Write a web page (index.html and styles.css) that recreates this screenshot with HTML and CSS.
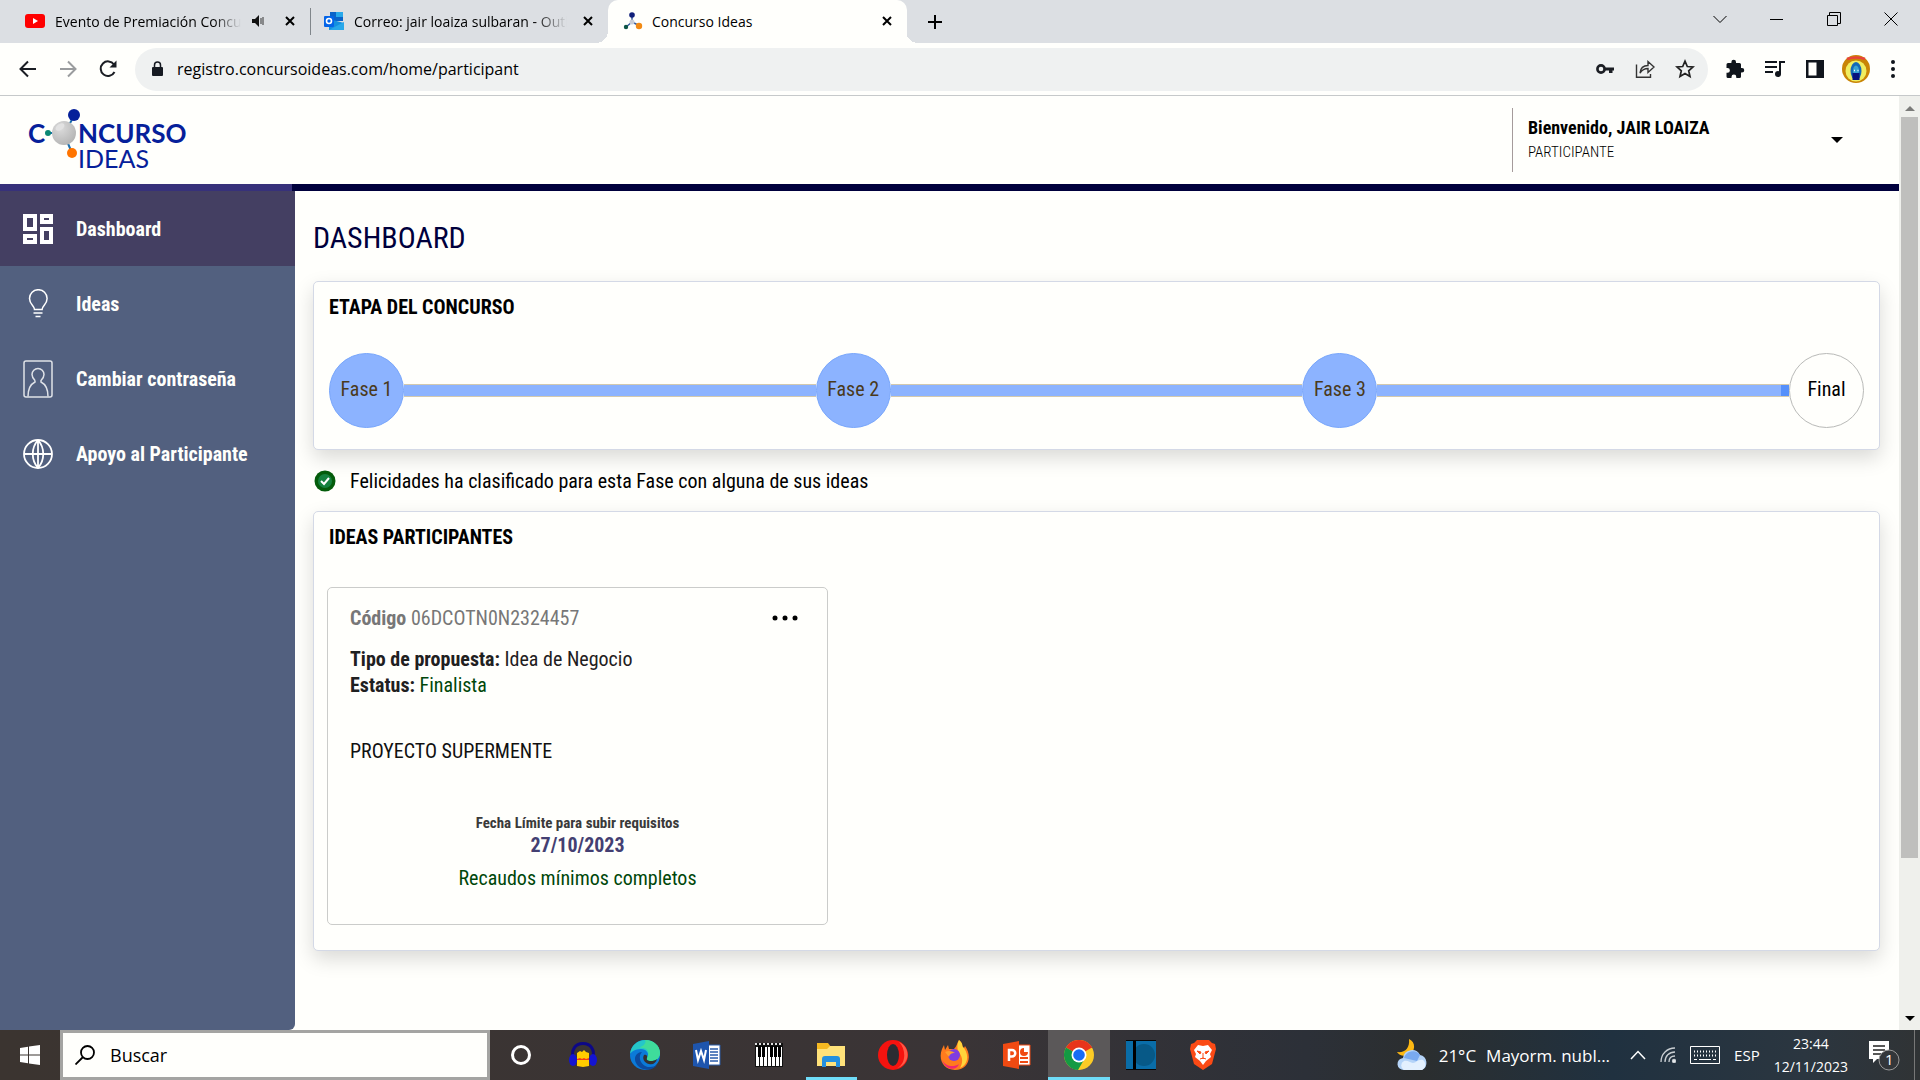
FILE: index.html
```html
<!DOCTYPE html>
<html lang="es">
<head>
    <meta charset="UTF-8">
    <meta name="viewport" content="width=device-width, initial-scale=1.0">
    <title>Concurso Ideas</title>
    <link rel="stylesheet" href="styles.css">
</head>
<body>
    <!-- Tabs -->
    <div class="tab-strip">
        <div class="tab">
            <svg class="favicon" width="20" height="20" viewBox="0 0 20 20"><rect y="3" width="20" height="14" rx="3" fill="#f00"/><path d="M8 7l5 3-5 3z" fill="#fff"/></svg>
            <span class="tab-title fade">Evento de Premiación Concurso</span>
            <svg width="14" height="14" viewBox="0 0 14 14"><path d="M1 5h3l4-4v12L4 9H1z" fill="#111"/><path d="M10 4v6M12 3v8" stroke="#333" fill="none"/></svg>
            <button class="tab-close" aria-label="Cerrar"><svg width="10" height="10" viewBox="0 0 10 10"><path d="M1 1l8 8M9 1l-8 8"/></svg></button>
        </div>
        <div class="tab tab-second">
            <svg class="favicon" width="20" height="20" viewBox="0 0 20 20"><path d="M6 1h13v9H6z" fill="#0a63c9"/><path d="M12 1h7v5h-7z" fill="#28a8ea"/><path d="M5 8l15 4v7H5z" fill="#1490df"/><path d="M5 19l15-8v8z" fill="#28a8ea"/><rect y="5" width="10" height="11" rx="1" fill="#0364e8"/><circle cx="5" cy="10" r="2.5" fill="none" stroke="#fff" stroke-width="1.6"/></svg>
            <span class="tab-title fade">Correo: jair loaiza sulbaran - Outlook</span>
            <button class="tab-close" aria-label="Cerrar"><svg width="10" height="10" viewBox="0 0 10 10"><path d="M1 1l8 8M9 1l-8 8"/></svg></button>
        </div>
        <div class="tab tab-active">
            <svg class="favicon" width="20" height="20" viewBox="0 0 20 20"><path d="M9 4v7M9 11l-6 5M9 11l8 4" stroke="#345a9c" stroke-width="1.5"/><circle cx="9" cy="4" r="2.8" fill="#101f7a"/><circle cx="9" cy="11" r="2.5" fill="#c8ccd6"/><circle cx="3" cy="16" r="2.2" fill="#0d5547"/><circle cx="16" cy="15" r="3.2" fill="#f28a13"/></svg>
            <span class="tab-title">Concurso Ideas</span>
            <button class="tab-close" aria-label="Cerrar"><svg width="10" height="10" viewBox="0 0 10 10"><path d="M1 1l8 8M9 1l-8 8"/></svg></button>
        </div>
        <button class="new-tab" aria-label="Nueva pestaña"><svg width="16" height="16" viewBox="0 0 16 16"><path d="M8 1v14M1 8h14" stroke="#000" stroke-width="2"/></svg></button>
        <div class="window-controls">
            <button aria-label="Buscar pestañas"><svg width="14" height="14" viewBox="0 0 14 14"><path d="M.5 4L7 10.500 13.500 4"/></svg></button>
            <button aria-label="Minimizar"><svg width="14" height="14" viewBox="0 0 14 14"><path d="M0 7.500h13"/></svg></button>
            <button aria-label="Restaurar"><svg width="14" height="14" viewBox="0 0 14 14"><path d="M.5 3.500h10v10H.5zM2.500 3V.5h11v11H11"/></svg></button>
            <button aria-label="Cerrar ventana"><svg width="14" height="14" viewBox="0 0 14 14"><path d="M.5 .5l13 13M13.500 .5l-13 13"/></svg></button>
        </div>
    </div>

    <!-- Address bar -->
    <div class="toolbar">
        <button aria-label="Atrás"><svg width="20" height="20" viewBox="0 0 20 20"><path d="M18 10H3M10 2.500L2.500 10l7.500 7.500" stroke="#1b1e24" stroke-width="2" fill="none"/></svg></button>
        <button aria-label="Adelante"><svg width="20" height="20" viewBox="0 0 20 20"><path d="M2 10h15M10 2.500L17.500 10 10 17.500" stroke="#9a9c9e" stroke-width="2" fill="none"/></svg></button>
        <button aria-label="Recargar"><svg width="20" height="20" viewBox="0 0 20 20"><path d="M16.500 13A7.300 7.300 0 1 1 16 5.500" stroke="#1b1e24" stroke-width="2" fill="none"/><path d="M18.500 1.500v7h-7z" fill="#1b1e24"/></svg></button>
        <div class="omnibox">
            <svg width="12" height="16" viewBox="0 0 12 16"><rect x="1" y="6" width="11" height="9" rx="1" fill="#161a22"/><path d="M3.500 6V4a3 3 0 0 1 6 0v2" stroke="#161a22" stroke-width="1.500" fill="none"/></svg>
            <input type="text" class="url" aria-label="Dirección" value="registro.concursoideas.com/home/participant">
            <button aria-label="Contraseñas"><svg width="20" height="20" viewBox="0 0 20 20"><circle cx="6" cy="10" r="3.600" stroke="#1b1e24" stroke-width="2.600" fill="none"/><path d="M9 8.500h10v3h-1.500V14H14v-2.500H9z" fill="#1b1e24"/></svg></button>
            <button aria-label="Compartir"><svg width="20" height="20" viewBox="0 0 20 20" fill="none" stroke="#333" stroke-width="1.400"><path d="M1.500 5.500v12.800h14V15"/><path d="M5 14c.5-5 3-7.500 8-7.500V2.500l6 5.500-6 5.500v-4c-4 0-6 1.500-8 4.500z"/></svg></button>
            <button aria-label="Favoritos"><svg width="20" height="20" viewBox="0 0 20 20"><path d="M10 2.200l2.300 5.300 5.700.5-4.300 3.800 1.300 5.700-5-3-5 3 1.300-5.700L2 8l5.700-.5z" stroke="#222" stroke-width="1.700" fill="none"/></svg></button>
        </div>
        <div class="toolbar-actions">
            <button aria-label="Extensiones"><svg width="20" height="20" viewBox="0 0 20 20"><path d="M17 9h-1V5.500A1.500 1.500 0 0 0 14.500 4H11V3a2.300 2.300 0 0 0-4.600 0v1H3a1.500 1.500 0 0 0-1.500 1.500V9h1a2.400 2.400 0 0 1 0 4.800h-1v3.700A1.500 1.500 0 0 0 3 19h3.500v-1a2.400 2.400 0 0 1 4.800 0v1h3.200a1.500 1.500 0 0 0 1.500-1.500v-4h1a2.250 2.250 0 0 0 0-4.500z" fill="#10151c"/></svg></button>
            <button aria-label="Multimedia"><svg width="20" height="20" viewBox="0 0 20 20"><path d="M0 3h12M0 8h12M0 13h8" stroke="#10151c" stroke-width="2"/><path d="M15 15V3h5" stroke="#10151c" stroke-width="2" fill="none"/><circle cx="13" cy="15" r="3" fill="#10151c"/></svg></button>
            <button aria-label="Panel lateral"><svg width="20" height="20" viewBox="0 0 20 20"><path d="M1 1h18v18H1z" fill="#10151c"/><path d="M3.500 3.500h8v13h-8z" fill="#fffffc"/></svg></button>
            <button aria-label="Perfil"><svg width="28" height="28" viewBox="0 0 28 28"><circle cx="14" cy="14" r="14" fill="#c98505"/><circle cx="14" cy="16" r="10.500" fill="#f0ee60"/><path d="M5 4q9-3 18 0" stroke="#e8433a" stroke-width="2.500" fill="none"/><ellipse cx="14" cy="16" rx="5.500" ry="9" fill="#1268b8"/><ellipse cx="14" cy="16" rx="3" ry="5.500" fill="#38a3d2"/><path d="M10.500 18h7v7h-7z" fill="#07137d"/><path d="M12 15.500h1M15.500 15.500h1" stroke="#fff" stroke-width="1.500"/></svg></button>
            <button aria-label="Menú"><svg width="6" height="20" viewBox="0 0 6 20" fill="#10151c"><circle cx="3" cy="3" r="2"/><circle cx="3" cy="10" r="2"/><circle cx="3" cy="17" r="2"/></svg></button>
        </div>
    </div>

    <div class="viewport">
        <div class="site">
            <header class="site-header">
                <svg class="logo" width="168" height="64" viewBox="0 0 168 64" role="img" aria-label="Concurso Ideas">
                    <defs>
                        <radialGradient id="ball" cx="35%" cy="30%" r="75%"><stop offset="0" stop-color="#dcdcdc"/><stop offset="1" stop-color="#b4b4b4"/></radialGradient>
                    </defs>
                    <path d="M46 8L36 26M20 25h10M36 26l8 19" stroke="#1c6fae" stroke-width="2"/>
                    <circle cx="46" cy="7" r="6" fill="#06209a"/>
                    <circle cx="20" cy="25" r="3" fill="#0b8874"/>
                    <circle cx="36" cy="25" r="12" fill="url(#ball)"/>
                    <ellipse cx="32" cy="19" rx="5" ry="3" fill="#e2e2e2" transform="rotate(-35 32 19)"/>
                    <circle cx="44" cy="45" r="5" fill="#ff7400"/>
                    <text class="logo-bold" x="0" y="35">C</text>
                    <text class="logo-bold" x="50" y="35">NCURSO</text>
                    <text class="logo-thin" x="50" y="60">IDEAS</text>
                </svg>
                <button class="user-menu">
                    <span class="user-text">
                        <strong>Bienvenido, JAIR LOAIZA</strong>
                        <span class="role">PARTICIPANTE</span>
                    </span>
                    <svg width="12" height="6" viewBox="0 0 12 6"><path d="M0 0h12L6 6z" fill="#000"/></svg>
                </button>
            </header>

            <div class="site-body">
                <nav class="sidebar">
                    <a href="#" class="active">
                        <svg width="30" height="30" viewBox="0 0 30 30" fill="none" stroke="#fff" stroke-width="4"><path d="M2 2h10v13H2zM19 2h9v6h-9zM2 22h10v6H2zM19 15h9v13h-9z"/></svg>
                        Dashboard
                    </a>
                    <a href="#">
                        <svg width="30" height="30" viewBox="0 0 30 30" fill="none" stroke="#fff" stroke-width="1.500"><path d="M11.500 20.500c0-4-5-5-5-11a8.800 8.800 0 0 1 17.600 0c0 6-5 7-5 11zM10.500 24h9M12.500 27.500h5"/></svg>
                        Ideas
                    </a>
                    <a href="#">
                        <svg width="30" height="38" viewBox="0 0 30 38" fill="none" stroke="#dfe2e8" stroke-width="1.500"><rect x="1" y="1" width="28" height="36" rx="2"/><path d="M12 20.500c-2-2-3-4-3-6a6 6 0 0 1 12 0c0 2-1 4-3 6v1.500c4 2 7 6 7 14.500M12 20.500V22c-4 2-7 6-7 14.500"/></svg>
                        Cambiar contraseña
                    </a>
                    <a href="#">
                        <svg width="30" height="30" viewBox="0 0 30 30" fill="none" stroke="#fff" stroke-width="1.800"><circle cx="15" cy="15" r="14"/><path d="M1 15h28M15 1c-7 8-7 20 0 28M15 1c7 8 7 20 0 28M15 1v28"/></svg>
                        Apoyo al Participante
                    </a>
                </nav>

                <main class="content">
                    <h1>DASHBOARD</h1>

                    <section class="card stage-card">
                        <h2>ETAPA DEL CONCURSO</h2>
                        <ol class="stages">
                            <li class="stage done">Fase 1</li>
                            <li class="line"></li>
                            <li class="stage done">Fase 2</li>
                            <li class="line"></li>
                            <li class="stage done">Fase 3</li>
                            <li class="line last"></li>
                            <li class="stage">Final</li>
                        </ol>
                    </section>

                    <p class="notice">
                        <svg width="22" height="22" viewBox="0 0 22 22"><circle cx="11" cy="11" r="10.500" fill="#045c0b"/><circle cx="11" cy="11" r="7" fill="#15813e"/><path d="M7 11l3 3 5-6" stroke="#fff" stroke-width="2" fill="none"/></svg>
                        Felicidades ha clasificado para esta Fase con alguna de sus ideas
                    </p>

                    <section class="card ideas-card">
                        <h2>IDEAS PARTICIPANTES</h2>
                        <article class="idea">
                            <div class="idea-top">
                                <span class="code"><b>Código</b> 06DCOTN0N2324457</span>
                                <button aria-label="Opciones"><svg width="26" height="6" viewBox="0 0 26 6"><circle cx="3" cy="3" r="2.500"/><circle cx="13" cy="3" r="2.500"/><circle cx="23" cy="3" r="2.500"/></svg></button>
                            </div>
                            <p><b>Tipo de propuesta:</b> Idea de Negocio</p>
                            <p><b>Estatus:</b> <span class="green">Finalista</span></p>
                            <p class="idea-name">PROYECTO SUPERMENTE</p>
                            <div class="deadline">
                                <span class="deadline-label">Fecha Límite para subir requisitos</span>
                                <strong>27/10/2023</strong>
                                <span class="green requirements">Recaudos mínimos completos</span>
                            </div>
                        </article>
                    </section>
                </main>
            </div>
        </div>

        <div class="scrollbar">
            <svg width="10" height="5" viewBox="0 0 10 5"><path d="M0 5h10L5 0z" fill="#7b7b79"/></svg>
            <div class="track"><div class="thumb"></div></div>
            <svg width="10" height="5" viewBox="0 0 10 5"><path d="M0 0h10L5 5z" fill="#000"/></svg>
        </div>
    </div>

    <!-- Taskbar -->
    <footer class="taskbar">
        <button class="start" aria-label="Inicio"><svg width="20" height="20" viewBox="0 0 20 20" fill="#fff"><path d="M0 3l8-1.200v7.700H0zM9 1.600L20 0v9.500H9zM0 10.500h8v7.700L0 17zM9 10.500h11V20L9 18.400z"/></svg></button>
        <label class="search">
            <svg width="20" height="20" viewBox="0 0 20 20"><circle cx="12.500" cy="7.500" r="6.500" stroke="#000" stroke-width="1.800" fill="none"/><path d="M8 12l-7.500 7.500" stroke="#000" stroke-width="1.800"/></svg>
            <input type="text" placeholder="Buscar" aria-label="Buscar">
        </label>
        <div class="apps">
            <button aria-label="Cortana"><svg width="22" height="22" viewBox="0 0 22 22"><circle cx="11" cy="11" r="8.500" stroke="#fff" stroke-width="3" fill="none"/></svg></button>
            <button aria-label="Audacity"><svg width="28" height="28" viewBox="0 0 28 28"><path d="M4 18C2 9 6 2.500 14 2.500S26 9 24 18" stroke="#0d0887" stroke-width="3" fill="none"/><path d="M8 25V12l3-2 2 1 2-2 2 2 3 1v13l-6 1z" fill="#fc0"/><path d="M8 18l3-1 2 1 2-1 2 1 3-1v2H8z" fill="#f33a12"/><ellipse cx="4" cy="19" rx="4" ry="6" fill="#1414d2"/><ellipse cx="24" cy="19" rx="4" ry="6" fill="#1414d2"/></svg></button>
            <button aria-label="Edge"><svg width="30" height="30" viewBox="0 0 30 30"><circle cx="15" cy="15" r="15" fill="#0b7ad8"/><path d="M0 14C1 5 8 0 15 0c9 0 15 6 15 13 0 5-4 8-9 8-3 0-5-1-4-3 3-5-1-9-6-9-6 0-10 3-11 5z" fill="#25c7c9"/><path d="M15 0c9 0 15 6 15 13 0 5-4 8-9 8-3 0-5-1-4-3 4-7-1-11-8-10C13 6 17 3 15 0z" fill="#3fdc9b"/><path d="M12 12c-5 5-1 15 8 15 3 0 5-1 7-2-5 7-17 6-21-2-3-6 1-11 6-11z" fill="#0c4a9e"/><path d="M17 18c-1 2 1 3 4 3 2 0 4-.5 6-2-1 4-4 6-8 5-5-1-7-6-5-9 2-1 4 1 3 3z" fill="#35302f"/></svg></button>
            <button aria-label="Word"><svg width="28" height="28" viewBox="0 0 28 28"><path d="M15 4h12v20H15z" fill="#fff" stroke="#2a5caa"/><path d="M17 8h8M17 11h8M17 14h8M17 17h8M17 20h8" stroke="#2a5caa" stroke-width="1.500"/><path d="M0 3l16-3v28L0 25z" fill="#1e55ad"/><path d="M3 9l2 10 3-9 3 9 2-10" stroke="#fff" stroke-width="2" fill="none"/></svg></button>
            <button aria-label="Piano"><svg width="28" height="24" viewBox="0 0 28 24"><path d="M0 0h28v24H0z" fill="#111"/><path d="M1 4h3v19H1zM5 4h3v19H5zM9 4h3v19H9zM13 4h3v19h-3zM17 4h3v19h-3zM21 4h3v19h-3zM25 4h2v19h-2z" fill="#fff"/><path d="M3 3h3v11H3zM7 3h3v11H7zM15 3h3v11h-3zM19 3h3v11h-3zM23 3h3v11h-3z" fill="#000"/><path d="M0 1h28" stroke="#ddd" stroke-dasharray="2 2" stroke-width="2"/></svg></button>
            <button aria-label="Explorador" class="open"><svg width="28" height="24" viewBox="0 0 28 24"><path d="M0 0h11l3 4h14v19H0z" fill="#f5b921"/><path d="M0 6h10l3-3h15v20H0z" fill="#ffe27a"/><path d="M5 24v-8a3 3 0 0 1 3-3h12a3 3 0 0 1 3 3v8h-4v-5H9v5z" fill="#2490df"/></svg></button>
            <button aria-label="Opera"><svg width="30" height="30" viewBox="0 0 30 30"><circle cx="15" cy="15" r="15" fill="#f5130f"/><path d="M17 29C28 26 29 10 21 2c12 5 12 23-4 27z" fill="#ff5a47"/><ellipse cx="15" cy="15" rx="6" ry="11" fill="#2b2c32"/></svg></button>
            <button aria-label="Firefox"><svg width="30" height="30" viewBox="0 0 30 30"><path d="M19 0c5 4 2 6 5 8l1-2c8 11 3 24-10 24C3 30-2 19 2 9l2-4 1 5 3-5 1 4h5c3-3 3-6 5-9z" fill="#ff7b1d"/><path d="M19 0c5 4 2 6 5 8 6 9 3 17-4 20 4-7 2-12-2-17-1-4-1-7 1-11z" fill="#ffd43b"/><path d="M2 20c3 6 11 8 17 4-2 7-13 7-17-4z" fill="#f02770"/><circle cx="14" cy="15" r="6" fill="#7f3ce0"/><path d="M5 12c4-2 7-1 10 1-4 0-5 1-6 4z" fill="#ff9d2d"/></svg></button>
            <button aria-label="PowerPoint"><svg width="28" height="28" viewBox="0 0 28 28"><path d="M15 4h12v20H15z" fill="#fff" stroke="#f04a12"/><path d="M17 17h8M17 21h8" stroke="#f04a12" stroke-width="2"/><path d="M21 7a4 4 0 1 0 4 4h-4z" fill="#f04a12"/><path d="M0 3l16-3v28L0 25z" fill="#f04a12"/><path d="M6 20V9h3a3 3 0 0 1 0 6.500H6" stroke="#fff" stroke-width="2.500" fill="none"/></svg></button>
            <button aria-label="Chrome" class="open current"><svg width="30" height="30" viewBox="0 0 30 30"><circle cx="15" cy="15" r="15" fill="#fccb26"/><path d="M15 15L2 7.500A15 15 0 0 1 28 7.500z" fill="#e8341c"/><path d="M2 7.500A15 15 0 0 0 14 30l7-12-6-3z" fill="#149a43"/><path d="M15 8h13.300L26 5H12z" fill="#e8341c"/><circle cx="15" cy="15" r="7.500" fill="#fff"/><circle cx="15" cy="15" r="5.800" fill="#176cf5"/></svg></button>
            <button aria-label="Libro"><svg width="30" height="30" viewBox="0 0 30 30"><path d="M0 0h30v30H0z" fill="#0a6da8"/><circle cx="18" cy="15" r="11" fill="#075987"/><path d="M8.500 0v30" stroke="#000" stroke-width="3"/><path d="M0 .5h30M0 29.500h30" stroke="#050505"/></svg></button>
            <button aria-label="Brave"><svg width="26" height="30" viewBox="0 0 26 30"><path d="M7 0h12l3 3 3 1 1 5-4 15-9 6-9-6L0 9l1-5 3-1z" fill="#fb4a15"/><path d="M8 5l5 1 5-1 4 5-2 4 1 3-5 4-3 4-3-4-5-4 1-3-2-4z" fill="#fff"/><path d="M7 11l4 1-1 2zM19 11l-4 1 1 2zM13 13v5M10 19l3-1 3 1" stroke="#fb4a15" fill="#fb4a15"/></svg></button>
        </div>
        <div class="tray">
            <button class="weather">
                <svg width="32" height="32" viewBox="0 0 32 32"><path d="M12 0c7 3 7 13-1 16-5 2-9 0-11-3 8 1 13-4 12-13z" fill="#fdb813"/><path d="M7 31a6 6 0 0 1-1-12 9 9 0 0 1 17-3 8 8 0 0 1 2 15z" fill="#b5d4f8"/><path d="M7 19a9 9 0 0 1 16-3l-3 6z" fill="#79aaf0"/><path d="M7 31a5 5 0 0 1 0-9c4-1 6 2 9 2s5-4 10-3a6 6 0 0 1-1 10z" fill="#e3f0fe"/></svg>
                <span>21°C</span><span>Mayorm. nubl...</span>
            </button>
            <button aria-label="Iconos ocultos"><svg width="16" height="10" viewBox="0 0 16 10"><path d="M1 9l7-7.500L15 9" stroke="#fff" stroke-width="1.500" fill="none"/></svg></button>
            <button aria-label="Red"><svg width="16" height="16" viewBox="0 0 16 16" fill="none" stroke="#c9ced2" stroke-width="1.300"><path d="M1 15C1 7 7 1 15 1M5 15c0-6 4-10 10-10M9 15c0-4 2-6 6-6"/><circle cx="14" cy="14" r="1.500" fill="#fff"/></svg></button>
            <button aria-label="Teclado"><svg width="30" height="18" viewBox="0 0 30 18" fill="none" stroke="#fff"><path d="M.5 .5h29v17H.5z"/><path d="M4 5.500h22M4 9.500h22" stroke-width="2" stroke-dasharray="1 2"/><path d="M4 13.500h3M9 13.500h12M23 13.500h3"/></svg></button>
            <button class="lang">ESP</button>
            <button class="clock"><span>23:44</span><span>12/11/2023</span></button>
            <button class="notifications" aria-label="Notificaciones">
                <svg width="32" height="32" viewBox="0 0 32 32"><path d="M0 2h20v18H8l-4 4v-4H0z" fill="#fff"/><path d="M4 7h12M4 11h12M4 15h9" stroke="#222" stroke-width="1.500"/><circle cx="20" cy="21" r="10" fill="#33363a" stroke="#999"/></svg>
                <span class="badge">1</span>
            </button>
        </div>
    </footer>
</body>
</html>
```

FILE: styles.css
```css
* {
    box-sizing: border-box;
}
body {
    margin: 0;
    height: 100vh;
    display: flex;
    flex-direction: column;
    overflow: hidden;
    background: #fffffc;
    font-family: "Open Sans", "Noto Sans", sans-serif;
    color: #000;
}
button {
    display: flex;
    align-items: center;
    justify-content: center;
    padding: 0;
    border: none;
    background: none;
    color: inherit;
    font: inherit;
    cursor: pointer;
}
input {
    min-width: 0;
    padding: 0;
    border: none;
    outline: none;
    background: none;
    font: inherit;
}
svg {
    flex: none;
}
h1, h2, p, ol {
    margin: 0;
    padding: 0;
}

/* tabs */
.tab-strip {
    display: flex;
    height: 43px;
    flex: none;
    background: #dcdfe3;
    font-size: 14px;
}
.tab {
    display: flex;
    align-items: center;
    width: 311px;
    padding: 0 15px 1px 25px;
    border-right: 1px solid transparent;
}
.tab-second {
    width: 297px;
    padding: 0 14px 1px 13px;
}
.tab:first-child {
    border-image: linear-gradient(transparent 9px, #80868b 9px, #80868b 34px, transparent 34px) 1;
}
.tab-active {
    position: relative;
    width: 299px;
    padding: 0 14px 1px 15px;
    background: #fffffc;
    border-radius: 10px 10px 0 0;
}
.tab-active::before, .tab-active::after {
    content: "";
    position: absolute;
    bottom: 0;
    width: 12px;
    height: 12px;
}
.tab-active::before {
    right: 100%;
    background: radial-gradient(circle at 0 0, transparent 12px, #fffffc 12px);
}
.tab-active::after {
    left: 100%;
    background: radial-gradient(circle at 100% 0, transparent 12px, #fffffc 12px);
}
.favicon {
    margin-right: 10px;
}
.tab-active .favicon {
    margin-right: 9px;
}
.tab-title {
    flex: 1;
    overflow: hidden;
    white-space: nowrap;
}
.fade {
    mask-image: linear-gradient(to right, #000 85%, transparent);
}
.tab:first-child .tab-title {
    margin-right: 10px;
}
.tab-close {
    margin-left: 16px;
}
.tab:first-child .tab-close {
    margin-left: 20px;
}
.tab-close path {
    stroke: #000;
    stroke-width: 2;
}
.new-tab {
    width: 56px;
}
.window-controls {
    display: flex;
    margin-left: auto;
    padding: 0 1px 6px 0;
}
.window-controls button {
    width: 57px;
}
.window-controls svg {
    fill: none;
    stroke: #000;
}

/* address bar */
.toolbar {
    display: flex;
    align-items: center;
    gap: 20px;
    height: 53px;
    flex: none;
    padding: 0 24px 0 18px;
    border-bottom: 1px solid #c6c9ca;
}
.omnibox {
    display: flex;
    align-items: center;
    flex: 1;
    gap: 20px;
    height: 43px;
    margin-left: -3px;
    padding: 0 13px 0 16px;
    border-radius: 22px;
    background: #eff1f1;
}
.omnibox > svg {
    margin-right: -12px;
}
.url {
    flex: 1;
    margin-left: 6px;
    font-size: 16px;
}
.toolbar-actions {
    display: flex;
    align-items: center;
    gap: 20px;
    margin-left: -3px;
}
.toolbar-actions button:nth-child(4) {
    margin-left: -3px;
}

/* page */
.viewport {
    display: flex;
    flex: 1;
    min-height: 0;
}
.site {
    display: flex;
    flex-direction: column;
    flex: 1;
    font-family: "Roboto Condensed", "Liberation Sans Narrow", Roboto, sans-serif;
    font-size: 20px;
    line-height: 26px;
}
.site-header {
    display: flex;
    align-items: flex-start;
    justify-content: space-between;
    height: 95px;
    flex: none;
    padding: 12px 56px 0 28px;
    border-bottom: 7px solid #00003c;
    border-image: linear-gradient(to right, #37317a 297px, #00003c 297px) 7;
}
.logo text {
    font-family: Lato, sans-serif;
    fill: #06209a;
}
.logo-bold {
    font-size: 26px;
    font-weight: 700;
}
.logo-thin {
    font-size: 25px;
}
.user-menu {
    justify-content: space-between;
    width: 331px;
    height: 64px;
    padding-left: 15px;
    border-left: 1px solid #a59b9b;
    text-align: left;
}
.user-text {
    display: flex;
    flex-direction: column;
    font-size: 18px;
    line-height: 25px;
}
.role {
    font-size: 15px;
    font-weight: 300;
}
.site-body {
    display: flex;
    flex: 1;
}
.sidebar {
    width: 295px;
    flex: none;
    background: #52607f;
    border-radius: 0 0 6px 0;
}
.sidebar a {
    display: flex;
    align-items: center;
    gap: 23px;
    height: 75px;
    padding-left: 23px;
    color: #fffffc;
    font-weight: 700;
    text-decoration: none;
}
.sidebar .active {
    background: #443f62;
}
.content {
    flex: 1;
    padding: 27px 19px 0 18px;
}
h1 {
    padding-bottom: 23px;
    color: #00003c;
    font-size: 30px;
    font-weight: 400;
    line-height: 40px;
}
h2 {
    font-size: 20px;
    font-weight: 700;
    line-height: 26px;
}
.card {
    padding: 12px 15px;
    border: 1px solid #d4d9e6;
    border-radius: 5px;
    background: #fffffc;
    box-shadow: 0 8px 20px rgba(0, 0, 0, 0.15);
}
.stage-card {
    height: 169px;
}
.stages {
    display: flex;
    align-items: center;
    margin-top: 33px;
    list-style: none;
}
.stage {
    display: flex;
    align-items: center;
    justify-content: center;
    width: 75px;
    height: 75px;
    flex: none;
    padding-bottom: 4px;
    border: 1px solid #b9bab8;
    border-radius: 50%;
}
.stage.done {
    border-color: #78a6fb;
    background: #8cb3ff;
    color: #4a3a1c;
}
.line {
    flex: 1;
    height: 13px;
    background: #8cb3ff;
    border-top: 1px solid #d3c9ae;
    border-bottom: 1px solid #d3c9ae;
}
.line.last {
    background: linear-gradient(to left, #5590fb 8px, #8cb3ff 8px);
}
.notice {
    display: flex;
    align-items: center;
    gap: 14px;
    padding: 18px 0 17px 1px;
}
.ideas-card {
    height: 440px;
    padding-left: 13px;
}
.ideas-card h2 {
    padding-left: 2px;
}
.idea {
    width: 501px;
    height: 338px;
    margin-top: 37px;
    padding: 17px 29px 0 22px;
    border: 1px solid #cbccca;
    border-radius: 5px;
    color: #1f2021;
}
.idea-top {
    display: flex;
    justify-content: space-between;
    padding-bottom: 15px;
}
.code {
    color: #777;
}
.green {
    color: #00470a;
}
.idea-name {
    padding-top: 40px;
    color: #111;
}
.deadline {
    display: flex;
    flex-direction: column;
    align-items: center;
    margin-right: -7px;
    padding-top: 48px;
    line-height: 22px;
}
.deadline strong {
    color: #443f72;
}
.deadline-label {
    color: #3a3a3a;
    font-size: 15px;
    font-weight: 700;
}
.requirements {
    padding-top: 11px;
}

.scrollbar {
    display: flex;
    flex-direction: column;
    align-items: center;
    width: 21px;
    padding: 10px 0 9px;
    background: #eff0ec;
}
.track {
    flex: 1;
    width: 17px;
    padding: 6px 0;
}
.thumb {
    height: 83%;
    background: #bfbfbd;
}

/* taskbar */
.taskbar {
    display: flex;
    height: 50px;
    flex: none;
    background: linear-gradient(to right, #3b3430, #3a3436 50%, #2c3038 68%, #2b2e2f 74%, #203140 84%, #2b3640 94%, #303335);
    color: #fff;
    font-size: 18px;
}
.start {
    width: 60px;
}
.search {
    display: flex;
    align-items: center;
    gap: 15px;
    width: 430px;
    padding-left: 12px;
    border: 3px solid #a4a4a2;
    background: #fffffc;
}
.search input::placeholder {
    color: #000;
    opacity: 1;
}
.apps {
    display: flex;
}
.apps button {
    width: 62px;
}
.apps .open {
    background: linear-gradient(#6fdcf8, #6fdcf8) bottom / 51px 3px no-repeat;
}
.apps .current {
    background-color: #5b5859;
    background-size: 100% 3px;
}
.tray {
    display: flex;
    align-items: center;
    margin-left: auto;
    padding-right: 5px;
    gap: 14px;
}
.weather {
    gap: 10px;
    margin-right: 6px;
    font-size: 17px;
}
.lang {
    font-size: 15px;
}
.clock {
    flex-direction: column;
    margin-right: 7px;
    font-size: 14px;
    line-height: 23px;
}
.notifications {
    position: relative;
    justify-content: flex-start;
    width: 46px;
    height: 50px;
    border-right: 1px solid #777;
}
.badge {
    position: absolute;
    left: 16px;
    top: 19px;
    font-size: 15px;
}
```
